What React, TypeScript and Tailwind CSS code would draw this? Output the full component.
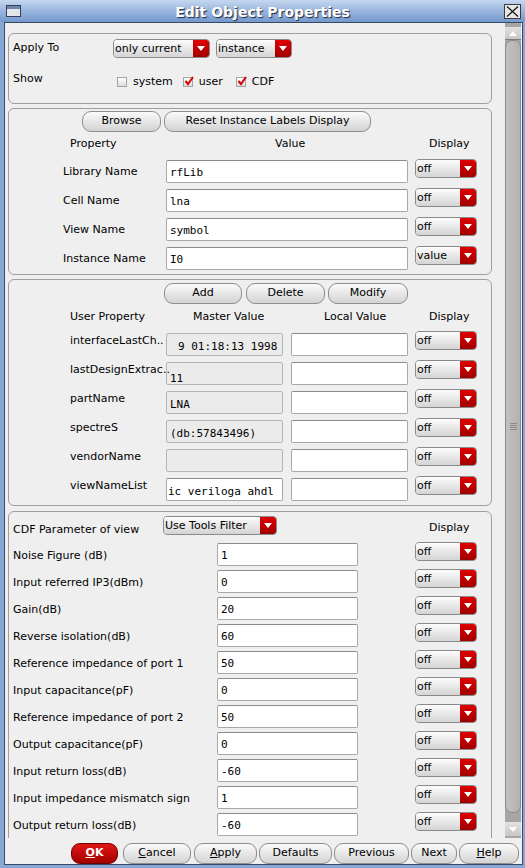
import React from 'react';

const sans = "font-['DejaVu_Sans',sans-serif]";
const mono = "font-['DejaVu_Sans_Mono',monospace]";

function Arrow({ up = false }: { up?: boolean }) {
  return (
    <svg width="8" height="5" viewBox="0 0 8 5">
      <path d={up ? 'M0 5 L4 0 L8 5 Z' : 'M0 0 L8 0 L4 5 Z'} fill="#ffffff" />
    </svg>
  );
}

function Combo({ text, w = 'w-[62px]', className = '' }: { text: string; w?: string; className?: string }) {
  return (
    <div className={`flex h-[19px] ${w} shrink-0 overflow-hidden rounded-[4px] border border-[#8a8a8a] ${className}`}>
      <div className="flex-1 bg-gradient-to-b from-[#fdfdfd] to-[#d4d4d4] pl-[1px] text-[11px] leading-[17px] text-black">{text}</div>
      <div className="flex w-[16px] items-center justify-center bg-gradient-to-b from-[#e00000] to-[#a00000]">
        <Arrow />
      </div>
    </div>
  );
}

function Btn({ children, w, red = false }: { children: React.ReactNode; w: string; red?: boolean }) {
  return (
    <div
      className={`flex h-[21px] ${w} shrink-0 items-center justify-center rounded-[9px] border text-[11px] ${
        red
          ? 'border-[#700000] bg-gradient-to-b from-[#e21616] to-[#a20000] font-bold text-white'
          : 'border-[#8e8e8e] bg-gradient-to-b from-[#fbfbfb] to-[#d3d3d3] text-black'
      }`}
    >
      {children}
    </div>
  );
}

function Field({ value, w, gray = false, pl = 'pl-[3px]', pt = 'pt-[1px]', className = '' }: { value: string; w: string; gray?: boolean; pl?: string; pt?: string; className?: string }) {
  return (
    <div
      className={`h-[23px] ${w} shrink-0 overflow-hidden whitespace-pre rounded-[2px] border ${
        gray ? 'border-[#b5b5b5] bg-[#ebebeb]' : 'border-[#a8a8a8] border-t-[#8c8c8c] bg-white'
      } ${pl} ${pt} ${mono} text-[11px] leading-[21px] text-black ${className}`}
    >
      {value}
    </div>
  );
}

function Check({ on }: { on: boolean }) {
  return (
    <div className="relative h-[10px] w-[10px] shrink-0 border border-[#a4a4a4] bg-gradient-to-b from-white to-[#dcdcdc]">
      {on && (
        <svg width="10" height="10" viewBox="0 0 10 10" className="absolute left-0 top-[-2px]">
          <path d="M1.5 5 L4 8 L9 1" stroke="#d40000" strokeWidth="2" fill="none" />
        </svg>
      )}
    </div>
  );
}

const props2 = [
  ['Library Name', 'rfLib', 'off'],
  ['Cell Name', 'lna', 'off'],
  ['View Name', 'symbol', 'off'],
  ['Instance Name', 'I0', 'value'],
];

const props3 = [
  ['interfaceLastCh..', '9 01:18:13 1998'],
  ['lastDesignExtrac..', '11'],
  ['partName', 'LNA'],
  ['spectreS', '(db:57843496)'],
  ['vendorName', ''],
  ['viewNameList', 'ic veriloga ahdl'],
];

const cdf = [
  ['Noise Figure (dB)', '1'],
  ['Input referred IP3(dBm)', '0'],
  ['Gain(dB)', '20'],
  ['Reverse isolation(dB)', '60'],
  ['Reference impedance of port 1', '50'],
  ['Input capacitance(pF)', '0'],
  ['Reference impedance of port 2', '50'],
  ['Output capacitance(pF)', '0'],
  ['Input return loss(dB)', '-60'],
  ['Input impedance mismatch sign', '1'],
  ['Output return loss(dB)', '-60'],
];

const App: React.FC = () => {
  return (
    <div className={`flex h-[868px] w-[525px] flex-col overflow-hidden bg-[#87a7d6] ${sans} text-[11px] text-black`}>
      {/* title bar */}
      <div className="flex h-[22px] shrink-0 items-center bg-gradient-to-b from-[#c6d8f0] via-[#98b5de] to-[#7598cc]">
        <div className="flex w-[24px] items-center pl-[6px]">
          <div className="h-[12px] w-[15px] border border-[#34435c] bg-[#e2e5ea]">
            <div className="h-[3px] bg-[#6e85aa]" />
          </div>
        </div>
        <div className="flex-1 pt-[1px] text-center text-[14px] font-bold leading-[22px] text-white [text-shadow:1px_1px_1px_#1d2b44]">
          Edit Object Properties
        </div>
        <div className="flex w-[24px] justify-end pr-[4px]">
          <div className="flex h-[15px] w-[17px] items-center justify-center border border-[#3c3c3c] bg-[#e6e6e6]">
            <svg width="13" height="11" viewBox="0 0 13 11">
              <path d="M1 0.5 L12 10.5 M12 0.5 L1 10.5" stroke="#111" strokeWidth="1.2" />
            </svg>
          </div>
        </div>
      </div>

      {/* inner panel */}
      <div className="mb-[3px] ml-[4px] mr-[2px] flex min-h-0 flex-1 flex-col border border-[#394a66] bg-[#efefef]">
        <div className="flex h-[815px] shrink-0">
          {/* viewport */}
          <div className="h-[815px] w-[500px] shrink-0 overflow-hidden pl-[3px] pt-[10px]">
            {/* section 1 */}
            <div className="w-[484px] rounded-[6px] border border-[#9f9f9f] pb-[11px] pl-[4px] pt-[4px]">
              <div className="flex h-[20px] items-center">
                <div className="w-[100px]">Apply To</div>
                <Combo text="only current" w="w-[97px]" />
                <Combo text="instance" w="w-[76px]" className="ml-[6px]" />
              </div>
              <div className="mt-[14px] flex h-[20px] items-center">
                <div className="w-[104px] -translate-y-[3px]">Show</div>
                <Check on={false} />
                <span className="ml-[6px]">system</span>
                <div className="ml-[10px]"><Check on /></div>
                <span className="ml-[6px]">user</span>
                <div className="ml-[13px]"><Check on /></div>
                <span className="ml-[6px]">CDF</span>
              </div>
            </div>

            {/* section 2 */}
            <div className="mt-[4px] w-[484px] rounded-[6px] border border-[#9f9f9f] pb-[4px] pt-[2px]">
              <div className="flex gap-[3px] pl-[73px]">
                <Btn w="w-[79px]">Browse</Btn>
                <Btn w="w-[207px]">Reset Instance Labels Display</Btn>
              </div>
              <div className="mt-[4px] flex h-[16px] items-center pl-[61px]">
                <div className="w-[205px]">Property</div>
                <div className="w-[154px]">Value</div>
                <div>Display</div>
              </div>
              <div className="mt-[8px] flex flex-col gap-[6px]">
                {props2.map(([l, v, d]) => (
                  <div key={l} className="flex h-[23px] items-start pl-[54px]">
                    <div className="w-[103px] leading-[23px]">{l}</div>
                    <Field value={v} w="w-[242px]" />
                    <Combo text={d} className="-mt-[1px] ml-[7px]" />
                  </div>
                ))}
              </div>
            </div>

            {/* section 3 */}
            <div className="mt-[4px] w-[484px] rounded-[6px] border border-[#9f9f9f] pb-[4px] pt-[3px]">
              <div className="flex pl-[155px]">
                <Btn w="w-[78px]">Add</Btn>
                <div className="ml-[4px]"><Btn w="w-[79px]">Delete</Btn></div>
                <div className="ml-[3px]"><Btn w="w-[80px]">Modify</Btn></div>
              </div>
              <div className="mt-[5px] flex h-[16px] items-center pl-[61px]">
                <div className="w-[123px]">User Property</div>
                <div className="w-[131px]">Master Value</div>
                <div className="w-[105px]">Local Value</div>
                <div>Display</div>
              </div>
              <div className="mt-[8px] flex flex-col gap-[6px]">
                {props3.map(([l, v], i) => (
                  <div key={l} className="flex h-[23px] items-start pl-[61px]">
                    <div className="relative z-10 mt-[1px] w-[96px] whitespace-nowrap leading-[14px]">{l}</div>
                    <Field
                      value={v}
                      w="w-[117px]"
                      gray={i < 5}
                      pl={i === 0 ? 'pl-[11px]' : i === 5 ? 'pl-[1px]' : 'pl-[3px]'}
                      pt={i === 1 ? 'pt-[5px]' : 'pt-[2px]'}
                      className={i === 5 ? 'border-[#8a8a8a] bg-[#f4f4f4]' : ''}
                    />
                    <Field value="" w="w-[117px]" className="ml-[8px]" />
                    <Combo text="off" className="-mt-[2px] ml-[7px]" />
                  </div>
                ))}
              </div>
            </div>

            {/* section 4 */}
            <div className="mt-[5px] w-[484px] rounded-[6px] border border-[#9f9f9f] pb-[6px] pl-[4px] pt-[4px]">
              <div className="flex h-[19px] items-start">
                <div className="mt-[7px] w-[150px] leading-[14px]">CDF Parameter of view</div>
                <Combo text="Use Tools Filter" w="w-[114px]" />
                <div className="ml-[152px] mt-[5px] leading-[14px]">Display</div>
              </div>
              <div className="mt-[8px] flex flex-col gap-[4px]">
                {cdf.map(([l, v]) => (
                  <div key={l} className="flex h-[23px] items-start">
                    <div className="w-[204px] leading-[25px]">{l}</div>
                    <Field value={v} w="w-[141px]" />
                    <Combo text="off" className="-mt-[1px] ml-[57px]" />
                  </div>
                ))}
              </div>
            </div>
          </div>

          {/* scrollbar */}
          <div className="flex h-[815px] w-[16px] shrink-0 flex-col bg-[#a6a6a6] pb-[2px] pt-[4px]">
            <div className="flex h-[13px] items-center justify-center border-b border-[#7c7c7c] bg-gradient-to-b from-[#e2e2e2] to-[#c6c6c6]">
              <Arrow up />
            </div>
            <div className="flex flex-1 items-center justify-center rounded-[7px] border border-[#8a8a8a] bg-gradient-to-r from-[#c2c2c2] to-[#b2b2b2]">
              <div className="flex flex-col gap-[1px]">
                <div className="h-[1px] w-[7px] bg-[#8a8a8a]" />
                <div className="h-[1px] w-[7px] bg-[#8a8a8a]" />
                <div className="h-[1px] w-[7px] bg-[#8a8a8a]" />
                <div className="h-[1px] w-[7px] bg-[#8a8a8a]" />
              </div>
            </div>
            <div className="mt-[9px] flex h-[14px] items-center justify-center bg-gradient-to-b from-[#e2e2e2] to-[#c6c6c6]">
              <Arrow />
            </div>
          </div>
        </div>

        {/* button bar */}
        <div className="flex h-[26px] shrink-0 items-start pl-[66px] pt-[5px]">
          <Btn w="w-[47px]" red>
            <u>O</u>K
          </Btn>
          <div className="ml-[5px]"><Btn w="w-[68px]"><u>C</u>ancel</Btn></div>
          <div className="ml-[3px]"><Btn w="w-[63px]"><u>A</u>pply</Btn></div>
          <div className="ml-[2px]"><Btn w="w-[73px]">Defaults</Btn></div>
          <div className="ml-[2px]"><Btn w="w-[75px]">Previous</Btn></div>
          <div className="ml-[2px]"><Btn w="w-[46px]">Next</Btn></div>
          <div className="ml-[2px]"><Btn w="w-[60px]"><u>H</u>elp</Btn></div>
        </div>
      </div>
    </div>
  );
};

export default App;
